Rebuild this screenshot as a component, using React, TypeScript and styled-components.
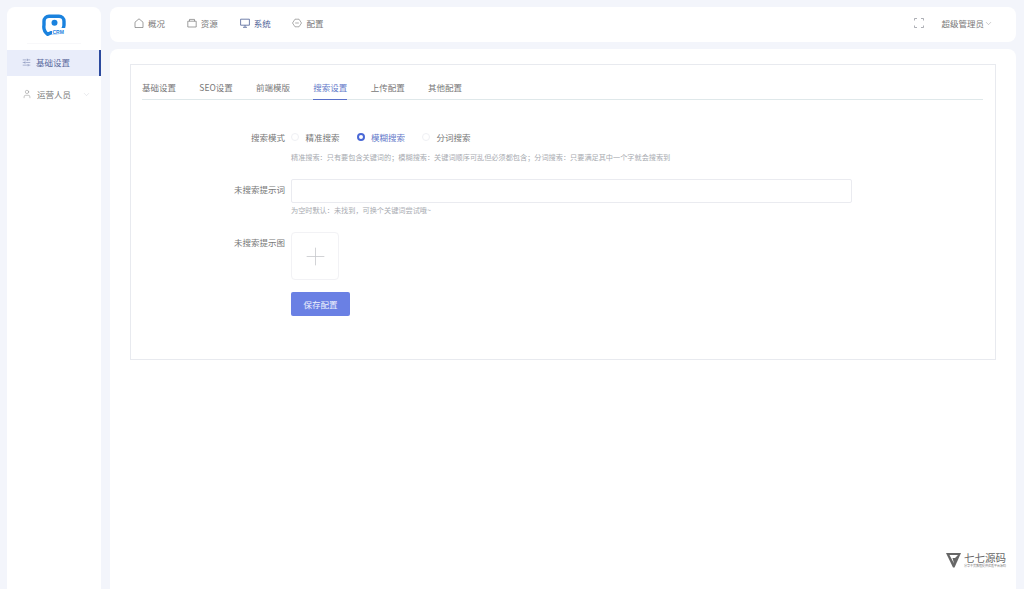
import styled, { createGlobalStyle } from 'styled-components';
import { ChevronDown, Plus, SlidersHorizontal, User } from 'lucide-react';

const GlobalStyle = createGlobalStyle`
  html, body {
    margin: 0;
    height: 100%;
    background: #f3f5fb;
    font-family: "Noto Sans CJK SC", "Liberation Sans", sans-serif;
    color: #666;
    overflow: hidden;
  }
  * { box-sizing: border-box; }
`;

const Page = styled.div`
  display: flex;
  gap: 9px;
  height: 589px;
  padding: 7px 8px 0 7px;
`;

const Sidebar = styled.aside`
  width: 94px;
  flex-shrink: 0;
  background: #fff;
  border-radius: 8px 8px 0 0;
`;

const LogoBox = styled.div`
  height: 37px;
  margin: 0 20px 6px;
  display: flex;
  align-items: center;
  justify-content: center;
  border-bottom: 1px solid #f8f8fa;
`;

const MenuItem = styled.div<{ $active?: boolean }>`
  height: 26px;
  margin-bottom: 6px;
  display: flex;
  align-items: center;
  gap: 5px;
  padding: 0 0 2px 15px;
  font-size: 8.5px;
  color: ${(p) => (p.$active ? '#5a6a9c' : '#777')};
  background: ${(p) => (p.$active ? '#e9edfa' : '#fff')};
  border-right: ${(p) => (p.$active ? '2.5px solid #2c4a9e' : 'none')};
`;

const MenuArrow = styled.span`
  display: flex;
  margin-left: 6px;
  color: #c4c7cf;
`;

const Content = styled.div`
  flex: 1;
  display: flex;
  flex-direction: column;
  gap: 7px;
  min-width: 0;
`;

const TopBar = styled.header`
  height: 35px;
  flex-shrink: 0;
  display: flex;
  align-items: center;
  padding: 0 23px 3px 24px;
  background: #fff;
  border-radius: 8px;
`;

const TopNav = styled.nav`
  display: flex;
  gap: 21.8px;
`;

const TopLink = styled.div<{ $active?: boolean }>`
  display: flex;
  align-items: center;
  gap: 4px;
  font-size: 8.5px;
  color: ${(p) => (p.$active ? '#4f6297' : '#777')};
`;

const TopRight = styled.div`
  margin-left: auto;
  display: flex;
  align-items: center;
  gap: 17.5px;
  font-size: 8.5px;
  color: #777;
`;

const UserName = styled.span`
  display: flex;
  align-items: center;
`;

const Main = styled.main`
  flex: 1;
  padding: 15px 20px;
  background: #fff;
  border-radius: 8px 8px 0 0;
`;

const Card = styled.section`
  height: 296px;
  padding: 11px 12px 0 11px;
  border: 1px solid #e8eaef;
`;

const Tabs = styled.div`
  display: flex;
  gap: 23.3px;
  height: 24px;
  border-bottom: 1px solid #dfe8ea;
`;

const Tab = styled.div<{ $active?: boolean }>`
  height: 24px;
  line-height: 23px;
  font-size: 8.5px;
  white-space: nowrap;
  color: ${(p) => (p.$active ? '#6379c9' : '#777')};
  border-bottom: ${(p) => (p.$active ? '1px solid #5a71c9' : 'none')};
`;

const Form = styled.div`
  display: flex;
  flex-direction: column;
  padding-top: 28px;
`;

const Row = styled.div<{ $gap?: number }>`
  display: flex;
  gap: 6px;
  margin-bottom: ${(p) => p.$gap ?? 0}px;
`;

const Label = styled.label<{ $height: number }>`
  width: 143px;
  flex-shrink: 0;
  text-align: right;
  font-size: 8.5px;
  color: #777;
  line-height: ${(p) => p.$height}px;
`;

const Field = styled.div`
  display: flex;
  flex-direction: column;
  align-items: flex-start;
`;

const RadioGroup = styled.div`
  display: flex;
  align-items: center;
  gap: 17px;
  height: 18px;
`;

const RadioOption = styled.div<{ $on?: boolean }>`
  display: flex;
  align-items: center;
  gap: 6.5px;
  font-size: 8.5px;
  color: ${(p) => (p.$on ? '#6379c9' : '#777')};
`;

const RadioDot = styled.span<{ $on?: boolean }>`
  width: 8px;
  height: 8px;
  border-radius: 50%;
  background: #fff;
  border: ${(p) => (p.$on ? '2.5px solid #4a68d6' : '1px solid #eff0f4')};
`;

const Hint = styled.div<{ $top: number }>`
  margin-top: ${(p) => p.$top}px;
  font-size: 7.17px;
  line-height: 10px;
  color: #a8abb1;
  white-space: nowrap;
`;

const TextInput = styled.input`
  display: block;
  width: 561px;
  height: 24px;
  border: 1px solid #eaebf0;
  border-radius: 2px;
  background: #fff;
  outline: none;
`;

const Upload = styled.div`
  width: 48px;
  height: 48px;
  display: flex;
  align-items: center;
  justify-content: center;
  border: 1px solid #f2f2f5;
  border-radius: 4px;
  color: #c6c8cc;
`;

const SaveButton = styled.button`
  width: 59px;
  height: 24px;
  margin-left: 149px;
  padding: 0;
  border: none;
  border-radius: 2px;
  background: #6a80e4;
  color: #eef1fc;
  font-family: inherit;
  font-size: 8.5px;
`;

const Watermark = styled.div`
  position: absolute;
  left: 946px;
  top: 552px;
  display: flex;
  align-items: flex-start;
  gap: 3px;
  color: #666;
`;

const MarkText = styled.div`
  display: flex;
  flex-direction: column;
`;

const MarkTitle = styled.span`
  font-size: 10.5px;
  line-height: 12px;
`;

const MarkCaption = styled.span`
  font-size: 3px;
  line-height: 5px;
  color: #777;
  white-space: nowrap;
`;

function Logo() {
  return (
    <svg width="24" height="22" viewBox="0 0 24 22">
      <path
        d="M7 2.200h10a5 5 0 0 1 5 5v4a7.500 7.500 0 0 1-7.500 7.500H9l-3.300 1.600A9.500 9.500 0 0 1 2 11V7.200a5 5 0 0 1 5-5z"
        fill="#fff"
        stroke="#1a82de"
        strokeWidth="3.400"
      />
      <circle cx="12.500" cy="8.800" r="3" fill="#1a82de" />
      <rect x="10" y="14" width="14" height="6.500" fill="#fff" />
      <text x="10.500" y="19.500" fontSize="5" fontWeight="700" fill="#1a82de" fontFamily="Liberation Sans, sans-serif">
        CRM
      </text>
    </svg>
  );
}

function HomeIcon() {
  return (
    <svg width="10" height="10" viewBox="0 0 10 10" fill="none" stroke="currentColor" strokeWidth="0.7">
      <path d="M1 4.200 5 .8l4 3.400v5.300H1z" />
    </svg>
  );
}

function CaseIcon() {
  return (
    <svg width="10" height="10" viewBox="0 0 10 10" fill="none" stroke="currentColor" strokeWidth="0.7">
      <path d="M.8 3.200h8.400v5.800H.8zM2.500 3.200V1.400h5v1.800" />
    </svg>
  );
}

function ScreenIcon() {
  return (
    <svg width="10" height="10" viewBox="0 0 10 10" fill="none" stroke="currentColor" strokeWidth="0.8">
      <path d="M.6 1.200h8.800v6H.6zM5 7.200v2M3 9.300h4" />
    </svg>
  );
}

function GearIcon() {
  return (
    <svg width="10" height="10" viewBox="0 0 10 10" fill="none" stroke="currentColor" strokeWidth="0.6">
      <path d="M3 1.200h4l2.500 3.800L7 8.800H3L.5 5z" />
      <path d="M3.200 5h3.600" />
    </svg>
  );
}

function FullScreenIcon() {
  return (
    <svg width="10" height="10" viewBox="0 0 10 10" fill="none" stroke="#8b8e96" strokeWidth="0.7">
      <path d="M.5 2.500v-2h2.500M7 .5h2.500v2M9.500 7.500v2H7M3 9.500H.5v-2" />
    </svg>
  );
}

function MarkLogo() {
  return (
    <svg width="15" height="16" viewBox="0 0 15 16">
      <path d="M0 1h15L8.500 15.500H7z" fill="#666" />
      <path d="M3.500 3h8.500L9 6H6.500l1.500 5.500z" fill="#fff" />
    </svg>
  );
}

const topLinks = [
  { name: '概况', Icon: HomeIcon },
  { name: '资源', Icon: CaseIcon },
  { name: '系统', Icon: ScreenIcon, active: true },
  { name: '配置', Icon: GearIcon },
];

const tabs = ['基础设置', 'SEO设置', '前端模版', '搜索设置', '上传配置', '其他配置'];

export default function App() {
  return (
    <>
      <GlobalStyle />
      <Page>
        <Sidebar>
          <LogoBox>
            <Logo />
          </LogoBox>
          <MenuItem $active>
            <SlidersHorizontal size={9} strokeWidth={1.2} />
            基础设置
          </MenuItem>
          <MenuItem>
            <User size={10} strokeWidth={1} />
            运营人员
            <MenuArrow>
              <ChevronDown size={9} strokeWidth={1} />
            </MenuArrow>
          </MenuItem>
        </Sidebar>
        <Content>
          <TopBar>
            <TopNav>
              {topLinks.map(({ name, Icon, active }) => (
                <TopLink key={name} $active={active}>
                  <Icon />
                  {name}
                </TopLink>
              ))}
            </TopNav>
            <TopRight>
              <FullScreenIcon />
              <UserName>
                超级管理员
                <ChevronDown size={9} strokeWidth={1} />
              </UserName>
            </TopRight>
          </TopBar>
          <Main>
            <Card>
              <Tabs>
                {tabs.map((t) => (
                  <Tab key={t} $active={t === '搜索设置'}>
                    {t}
                  </Tab>
                ))}
              </Tabs>
              <Form>
                <Row $gap={17}>
                  <Label $height={18}>搜索模式</Label>
                  <Field>
                    <RadioGroup>
                      <RadioOption>
                        <RadioDot />
                        精准搜索
                      </RadioOption>
                      <RadioOption $on>
                        <RadioDot $on />
                        模糊搜索
                      </RadioOption>
                      <RadioOption>
                        <RadioDot />
                        分词搜索
                      </RadioOption>
                    </RadioGroup>
                    <Hint $top={6}>精准搜索：只有要包含关键词的；模糊搜索：关键词顺序可乱但必须都包含；分词搜索：只要满足其中一个字就会搜索到</Hint>
                  </Field>
                </Row>
                <Row $gap={17}>
                  <Label $height={20}>未搜索提示词</Label>
                  <Field>
                    <TextInput />
                    <Hint $top={2}>为空时默认：未找到，可换个关键词尝试哦~</Hint>
                  </Field>
                </Row>
                <Row $gap={12}>
                  <Label $height={20}>未搜索提示图</Label>
                  <Upload>
                    <Plus size={29} strokeWidth={0.66} />
                  </Upload>
                </Row>
                <SaveButton>保存配置</SaveButton>
              </Form>
            </Card>
          </Main>
        </Content>
      </Page>
      <Watermark>
        <MarkLogo />
        <MarkText>
          <MarkTitle>七七源码</MarkTitle>
          <MarkCaption>分享干货教程提供优质平台源码</MarkCaption>
        </MarkText>
      </Watermark>
    </>
  );
}
